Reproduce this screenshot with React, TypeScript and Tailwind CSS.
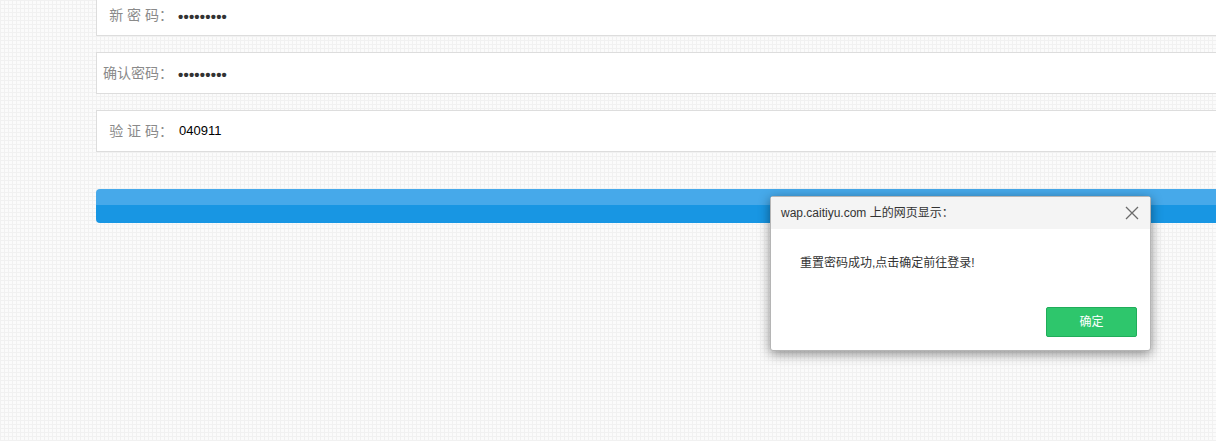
const cjk = "font-['Liberation_Sans','Noto_Sans_CJK_SC',sans-serif]"

function Field({ label, value, dots }: { label: string; value: string; dots?: boolean }) {
  return (
    <div className="flex h-[42px] items-center border border-[#dddddd] bg-white">
      <span className={`w-[76px] shrink-0 text-right text-[14px] text-[#8a8a8a] ${cjk}`}>{label}</span>
      <span
        className={
          dots
            ? "ml-[5px] pt-[4px] text-[15px] font-bold tracking-[0.2px] text-[#333]"
            : "ml-[6px] text-[13px] text-black"
        }
      >
        {value}
      </span>
    </div>
  )
}

export default function App() {
  return (
    <div
      className={`relative h-[441px] w-[1216px] overflow-hidden bg-[#fbfbfb] bg-[linear-gradient(#f1f1f1_1px,transparent_1px),linear-gradient(90deg,#f1f1f1_1px,transparent_1px)] bg-size-[4px_4px] ${cjk}`}
    >
      <div className="-mr-[20px] -mt-[6px] ml-[96px] flex flex-col gap-[16px]">
        <Field label="新 密 码：" value="•••••••••" dots />
        <Field label="确认密码：" value="•••••••••" dots />
        <Field label="验 证 码：" value="040911" />
        <div className="mt-[21px] h-[34px] rounded-[4px] bg-[linear-gradient(#46a9ea_0,#46a9ea_48%,#1896e3_48%,#1896e3_100%)]" />
      </div>

      <div className="absolute left-[770px] top-[196px] flex h-[155px] w-[381px] flex-col rounded-[3px] border border-[#b5b5b5] bg-white shadow-[0_3px_12px_rgba(0,0,0,0.45)]">
        <div className="flex h-[32px] items-center justify-between bg-[#f4f4f4] pl-[10px] pr-[10px]">
          <span className="text-[12px] text-[#333]">wap.caitiyu.com 上的网页显示：</span>
          <svg width="14" height="14" viewBox="0 0 14 14" className="mr-[1px]">
            <path d="M1 1L13 13M13 1L1 13" stroke="#6b6b6b" strokeWidth="1.3" fill="none" />
          </svg>
        </div>
        <div className="flex-1 px-[29px] pt-[25px] text-[12px] text-[#333]">重置密码成功,点击确定前往登录!</div>
        <div className="flex justify-end pb-[13px] pr-[13px]">
          <button className="h-[30px] w-[91px] rounded-[2px] border border-[#20ad5a] bg-[#2ec66c] text-[12px] text-white">
            确定
          </button>
        </div>
      </div>
    </div>
  )
}
